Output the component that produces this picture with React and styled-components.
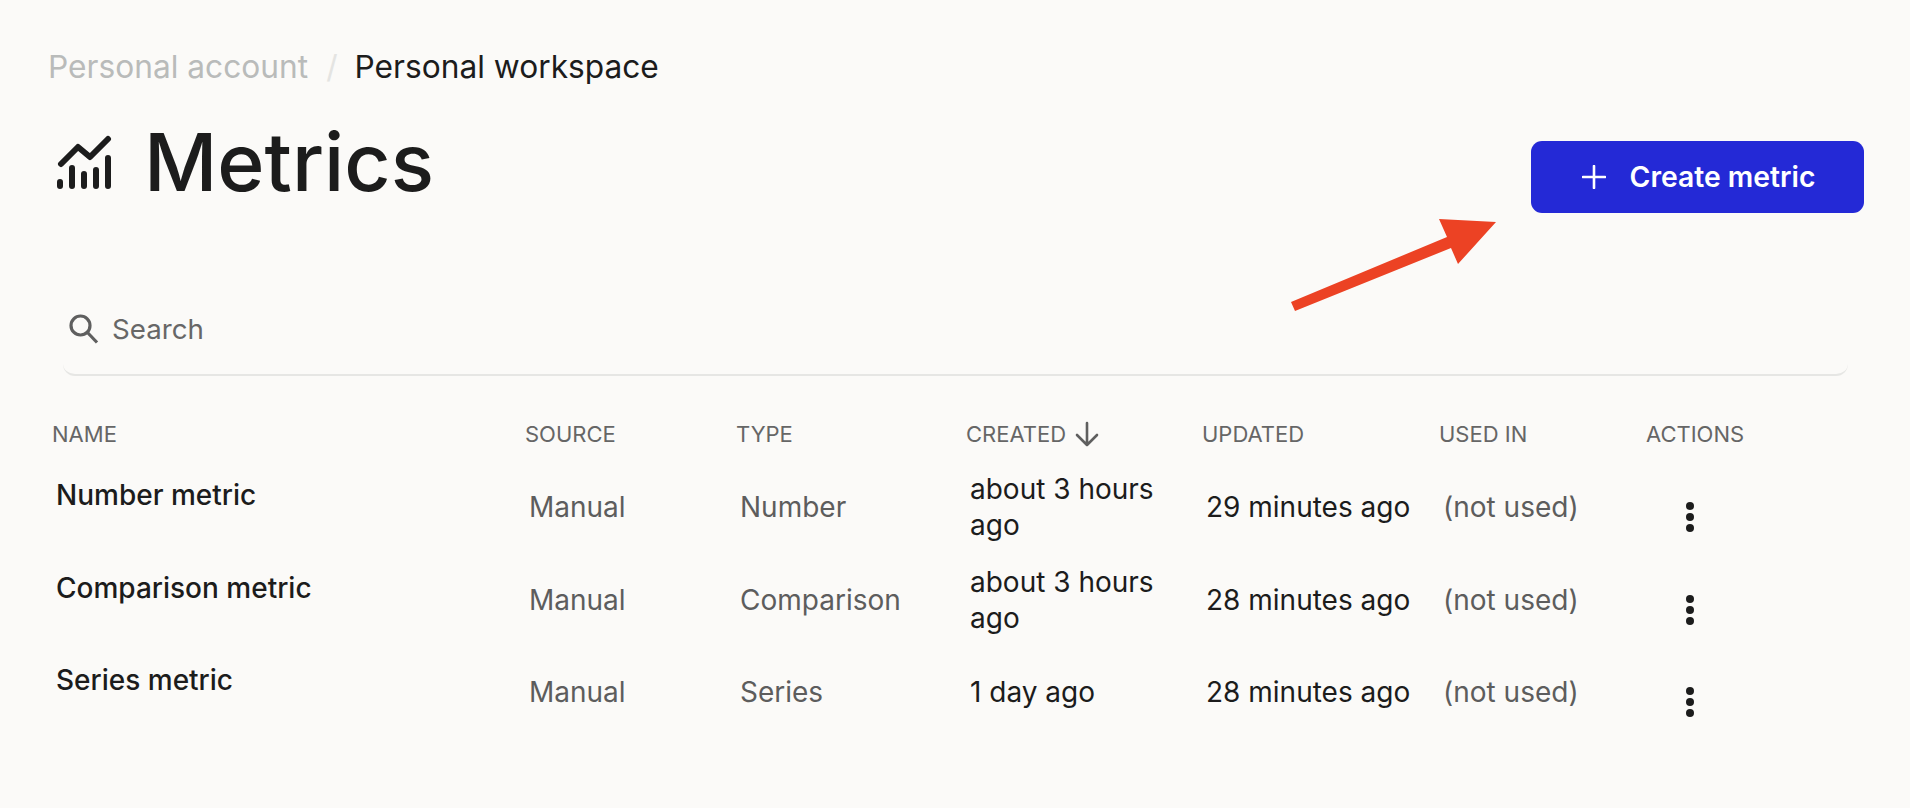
import styled, { createGlobalStyle } from "styled-components"

const GlobalStyle = createGlobalStyle`
    * { box-sizing: border-box; }
    html, body {
        margin: 0;
        background: #fbfaf8;
    }
    body {
        font-family: Inter, "Liberation Sans", sans-serif;
        color: #1c1c1c;
    }
`

const Page = styled.div`
    position: relative;
    width: 1910px;
    height: 808px;
    overflow: hidden;
    padding: 48px 46px 0 48px;
`

const Breadcrumb = styled.nav`
    display: flex;
    align-items: center;
    height: 38px;
    font-size: 31.7px;
    line-height: 38px;
`

const Crumb = styled.span`
    color: ${(p) => (p.$current ? "#1c1c1c" : "#b9bbba")};
`

const Separator = styled.span`
    color: #e4e4e2;
    margin: 0 17px 0 18px;
`

const HeaderRow = styled.div`
    display: flex;
    justify-content: space-between;
    align-items: flex-start;
    margin-top: 36px;
    height: 91px;
`

const Title = styled.h1`
    display: flex;
    align-items: center;
    margin: 0;
    font-size: 80.4px;
    line-height: 80px;
    font-weight: 500;
    color: #1c1c1c;
`

const TitleIcon = styled.svg`
    width: 62px;
    height: 56px;
    margin: 2px 25px 0 9px;
    flex: none;
`

const CreateButton = styled.button`
    display: flex;
    align-items: center;
    justify-content: center;
    gap: 24px;
    width: 333px;
    height: 72px;
    margin-top: 19px;
    border: 0;
    border-radius: 11px;
    background: #2429d6;
    color: #fff;
    font-family: inherit;
    font-size: 28.3px;
    font-weight: 600;
    padding: 0 0 0 2px;
`

const SearchBar = styled.div`
    display: flex;
    align-items: center;
    gap: 13px;
    width: 1785px;
    height: 77px;
    margin: 86px 0 0 15px;
    padding: 0 0 16px 6px;
    border-bottom: 2px solid #e6e6e4;
    border-radius: 0 0 12px 12px;
    font-size: 27.7px;
    color: #676767;
`

const Table = styled.div`
    margin: 43px 0 0 4px;
    font-size: 28px;
`

const Row = styled.div`
    display: grid;
    grid-template-columns: 473px 211px 230px 236px 237px 207px 1fr;
    align-items: center;
    height: ${(p) => (p.$head ? "30px" : "92.5px")};
    margin-bottom: ${(p) => (p.$head ? "12px" : "0")};
`

const HeadCell = styled.div`
    display: flex;
    align-items: center;
    gap: 7px;
    font-size: 22px;
    color: #666;
`

const Cell = styled.div`
    padding-left: 4px;
    line-height: 36px;
    color: ${(p) => (p.$muted ? "#5d5d5d" : "#1c1c1c")};
`

const NameCell = styled(Cell)`
    font-weight: 500;
    padding-bottom: 24px;
`

const ActionCell = styled.div`
    padding: 20px 0 0 39px;
    line-height: 0;
`

const Annotation = styled.svg`
    position: absolute;
    left: 1280px;
    top: 210px;
    width: 230px;
    height: 110px;
`

const columns = ["NAME", "SOURCE", "TYPE", "CREATED", "UPDATED", "USED IN", "ACTIONS"]

const metrics = [
    { name: "Number metric", type: "Number", created: "about 3 hours ago", updated: "29 minutes ago" },
    { name: "Comparison metric", type: "Comparison", created: "about 3 hours ago", updated: "28 minutes ago" },
    { name: "Series metric", type: "Series", created: "1 day ago", updated: "28 minutes ago" },
]

const Dots = () => (
    <svg width="10" height="32" viewBox="0 0 10 32" fill="#1c1c1c">
        <circle cx="5" cy="5" r="4" />
        <circle cx="5" cy="16" r="4" />
        <circle cx="5" cy="27" r="4" />
    </svg>
)

const App = () => {
    return (
        <Page>
            <GlobalStyle />

            <Breadcrumb>
                <Crumb>Personal account</Crumb>
                <Separator>/</Separator>
                <Crumb $current>Personal workspace</Crumb>
            </Breadcrumb>

            <HeaderRow>
                <Title>
                    <TitleIcon viewBox="0 0 62 56" fill="none" stroke="#1c1c1c" strokeWidth="6" strokeLinecap="round" strokeLinejoin="round">
                        <path d="M4 29 L21 12 L33 22 L51 4" />
                        <path d="M3 47 V51 M15 33 V51 M27 39 V51 M39 35 V51 M51 23 V51" />
                    </TitleIcon>
                    Metrics
                </Title>
                <CreateButton>
                    <svg width="24" height="24" viewBox="0 0 24 24" stroke="#fff" strokeWidth="2.6" strokeLinecap="round">
                        <path d="M12 1 V23 M1 12 H23" />
                    </svg>
                    Create metric
                </CreateButton>
            </HeaderRow>

            <SearchBar>
                <svg width="30" height="30" viewBox="0 0 30 30" fill="none" stroke="#5f5f5f" strokeWidth="3.2">
                    <circle cx="11.5" cy="11.5" r="9.5" />
                    <path d="M18.5 18.5 L28 28.5" />
                </svg>
                Search
            </SearchBar>

            <Table>
                <Row $head>
                    {columns.map((c) => (
                        <HeadCell key={c}>
                            {c}
                            {c === "CREATED" && (
                                <svg width="28" height="26" viewBox="0 0 28 26" fill="none" stroke="#5f5f5f" strokeWidth="2.6" strokeLinecap="round" strokeLinejoin="round">
                                    <path d="M14 2 V24 M4 14 L14 24 L24 14" />
                                </svg>
                            )}
                        </HeadCell>
                    ))}
                </Row>

                {metrics.map((m) => (
                    <Row key={m.name}>
                        <NameCell>{m.name}</NameCell>
                        <Cell $muted>Manual</Cell>
                        <Cell $muted>{m.type}</Cell>
                        <Cell>{m.created}</Cell>
                        <Cell>{m.updated}</Cell>
                        <Cell $muted>(not used)</Cell>
                        <ActionCell>
                            <Dots />
                        </ActionCell>
                    </Row>
                ))}
            </Table>

            <Annotation viewBox="1280 210 230 110">
                <path fill="#ec4224" d="M1291 302 L1447 237 L1439 219 L1496 222 L1458 264 L1451 248 L1295 311 Z" />
            </Annotation>
        </Page>
    )
}

export default App
